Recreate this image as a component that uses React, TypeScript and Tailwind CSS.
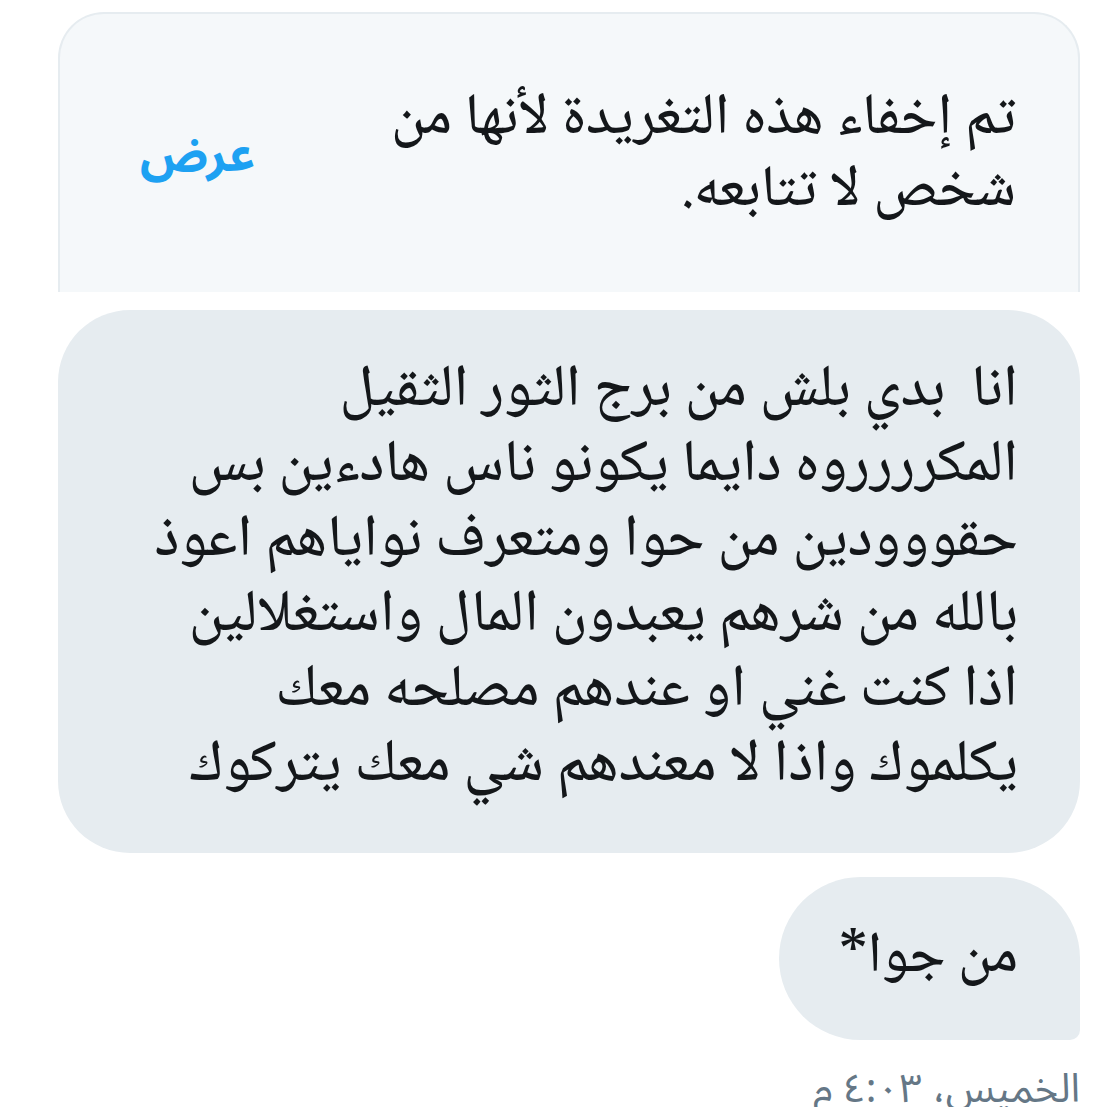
import React from 'react';

const naskh = { fontFamily: '"Noto Naskh Arabic", "DejaVu Sans", serif' };
const sans = { fontFamily: '"Noto Sans Arabic", "DejaVu Sans", sans-serif' };

const body = [
  'انا  بدي بلش من برج الثور الثقيل',
  'المكرررروه دايما يكونو ناس هادءين بس',
  'حقووودين من حوا ومتعرف نواياهم اعوذ',
  'بالله من شرهم يعبدون المال واستغلالين',
  'اذا كنت غني او عندهم مصلحه معك',
  'يكلموك واذا لا معندهم شي معك يتركوك',
];

export default function App() {
  return (
    <div dir="rtl" className="w-[1107px] h-[1107px] overflow-hidden bg-white">
      <div className="pt-[12px] pr-[27px] pl-[58px] flex flex-col items-start">
        {/* hidden tweet notice */}
        <div className="w-full h-[280px] bg-[#f5f8fa] border-2 border-b-0 border-[#e6ecf0] rounded-t-[46px] flex items-center justify-between pr-[62px] pl-[80px]">
          <p className="text-[58px] font-medium leading-[72px] text-[#14171a] mt-[8px]" style={naskh}>
            تم إخفاء هذه التغريدة لأنها من
            <br />
            شخص لا تتابعه.
          </p>
          <span className="text-[48px] font-bold text-[#1da1f2] mt-[6px]" style={sans}>عرض</span>
        </div>

        <div className="mt-[18px] w-full bg-[#e6ecf0] rounded-[72px] pr-[62px] pl-[60px] pt-[45px] pb-[48px]">
          <p className="text-[59px] font-medium leading-[75px] text-[#14171a] whitespace-pre" style={naskh}>
            {body.map((l, i) => (
              <span key={i} className="block">{l}</span>
            ))}
          </p>
        </div>

        <div className="mt-[24px] bg-[#e6ecf0] rounded-t-[82px] rounded-bl-[82px] rounded-br-[10px] pr-[62px] pl-[60px] h-[163px] flex items-center">
          <p className="text-[57px] font-medium text-[#14171a]" style={naskh}>من جوا*</p>
        </div>

        <div className="mt-[30px] text-[40px] text-[#657786] leading-none" style={sans}>الخميس، ٤:٠٣ م</div>
      </div>
    </div>
  );
}
